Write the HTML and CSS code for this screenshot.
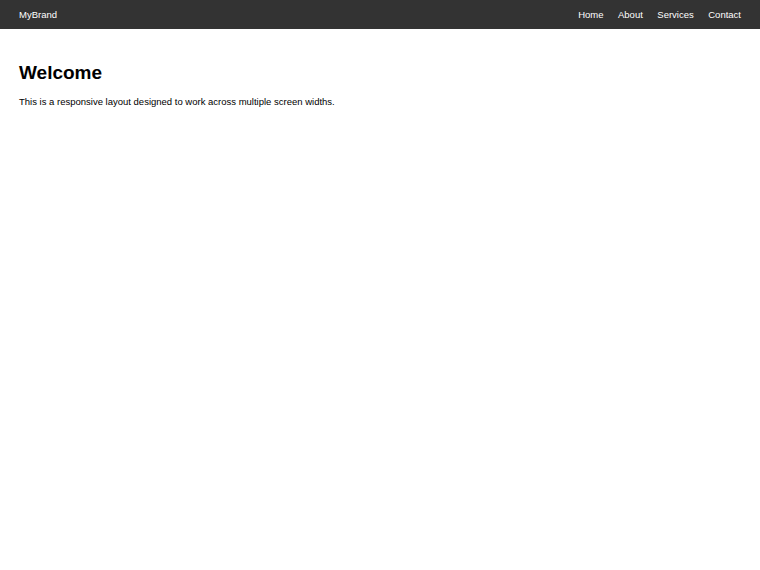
FILE: index.html
```html
<!DOCTYPE html>
<html lang="en">
<head>
  <meta charset="UTF-8">
  <meta name="viewport" content="width=device-width, initial-scale=1.0">
  <title>MyBrand</title>
  <link rel="stylesheet" href="styles.css">
</head>
<body>
  <header class="navbar">
    <div class="brand">MyBrand</div>
    <nav class="nav-links">
      <a href="#">Home</a>
      <a href="#">About</a>
      <a href="#">Services</a>
      <a href="#">Contact</a>
    </nav>
  </header>

  <main class="content">
    <h1>Welcome</h1>
    <p>This is a responsive layout designed to work across multiple screen widths.</p>
  </main>
</body>
</html>
```

FILE: styles.css
```css
body {
  margin: 0;
  font-family: "Liberation Sans", Arial, sans-serif;
  font-size: 9.5px;
  color: #000;
  background: #fff;
}
.navbar {
  display: flex;
  justify-content: space-between;
  align-items: center;
  height: 29px;
  padding: 0 19px;
  background: #333;
  color: #fff;
}
.nav-links {
  display: flex;
  gap: 14.5px;
}
.nav-links a {
  color: #fff;
  text-decoration: none;
}
.content {
  padding: 20px 19px;
}
.content h1 {
  font-size: 19px;
  margin: 13px 0 12px;
}
.content p {
  margin: 0;
}
```
